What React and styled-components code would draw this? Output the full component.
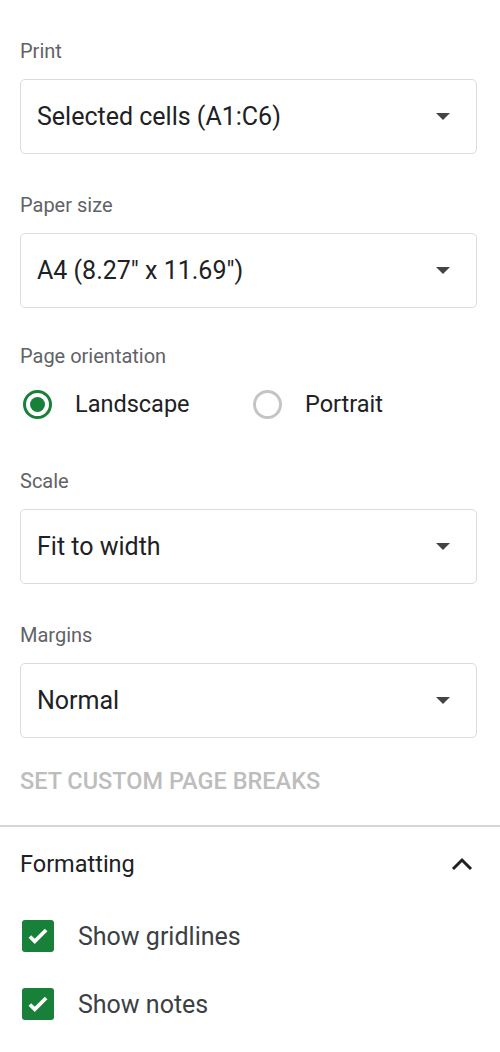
import styled, { createGlobalStyle } from "styled-components";

const Global = createGlobalStyle`
  body {
    margin: 0;
    background: #fff;
    font-family: Roboto, "Noto Sans", sans-serif;
  }
`;

const Panel = styled.div`
  width: 500px;
  display: flex;
  flex-direction: column;
`;

const Section = styled.div`
  padding: 0 23px 0 20px;
  display: flex;
  flex-direction: column;
`;

const Label = styled.div`
  font-size: 20px;
  color: #5f6368;
  line-height: 24px;
  margin-top: ${(p) => p.top}px;
`;

const Select = styled.div`
  margin-top: 16px;
  height: 75px;
  box-sizing: border-box;
  border: 1px solid #dadce0;
  border-radius: 5px;
  display: flex;
  align-items: center;
  justify-content: space-between;
  padding: 0 26px 0 16px;
  font-size: 25px;
  color: #202124;
`;

const Arrow = styled.span`
  width: 0;
  height: 0;
  border-left: 7px solid transparent;
  border-right: 7px solid transparent;
  border-top: 7px solid #444;
`;

const RadioRow = styled.div`
  display: flex;
  align-items: center;
  margin-top: 21px;
  height: 30px;
  padding-left: 3px;
`;

const RadioItem = styled.label`
  display: flex;
  align-items: center;
  gap: 23px;
  font-size: 23.5px;
  color: #202124;
  width: ${(p) => p.w}px;
`;

const RadioCircle = styled.span`
  width: 29px;
  height: 29px;
  box-sizing: border-box;
  border-radius: 50%;
  border: 3px solid ${(p) => (p.on ? "#188038" : "#c4c4c4")};
  display: flex;
  align-items: center;
  justify-content: center;
  &::after {
    content: "";
    display: ${(p) => (p.on ? "block" : "none")};
    width: 15px;
    height: 15px;
    border-radius: 50%;
    background: #188038;
  }
`;

const LinkText = styled.div`
  margin-top: 31px;
  font-size: 23.5px;
  font-weight: 500;
  color: #bdbdbd;
  line-height: 24px;
`;

const Divider = styled.div`
  margin-top: 32px;
  height: 2px;
  background: #d6d6d6;
`;

const Header = styled.div`
  display: flex;
  align-items: center;
  justify-content: space-between;
  padding: 0 27px 0 20px;
  margin-top: 23px;
  font-size: 23.5px;
  color: #202124;
  line-height: 28px;
`;

const CheckRow = styled.label`
  display: flex;
  align-items: center;
  gap: 24px;
  padding-left: 22px;
  height: 32px;
  margin-top: ${(p) => p.top}px;
  font-size: 25px;
  color: #3c4043;
`;

const Box = styled.span`
  width: 32px;
  height: 32px;
  border-radius: 3px;
  background: #188038;
  display: flex;
  align-items: center;
  justify-content: center;
`;

const Chevron = () => (
  <svg width="22" height="14" viewBox="0 0 22 14">
    <path d="M2 12L11 3l9 9" fill="none" stroke="#202124" strokeWidth="3" />
  </svg>
);

const Check = () => (
  <svg width="26" height="26" viewBox="0 0 24 24">
    <path d="M4.5 12.5l4.5 4.5L19.5 6.5" fill="none" stroke="#fff" strokeWidth="3.4" />
  </svg>
);

const Dropdown = ({ value }) => (
  <Select>
    <span>{value}</span>
    <Arrow />
  </Select>
);

export default function App() {
  return (
    <Panel>
      <Global />
      <Section>
        <Label top={39}>Print</Label>
        <Dropdown value="Selected cells (A1:C6)" />
        <Label top={39}>Paper size</Label>
        <Dropdown value={'A4 (8.27" x 11.69")'} />
        <Label top={36}>Page orientation</Label>
        <RadioRow>
          <RadioItem w={230}>
            <RadioCircle on />
            Landscape
          </RadioItem>
          <RadioItem w={200}>
            <RadioCircle />
            Portrait
          </RadioItem>
        </RadioRow>
        <Label top={50}>Scale</Label>
        <Dropdown value="Fit to width" />
        <Label top={39}>Margins</Label>
        <Dropdown value="Normal" />
        <LinkText>SET CUSTOM PAGE BREAKS</LinkText>
      </Section>
      <Divider />
      <Header>
        Formatting
        <Chevron />
      </Header>
      <CheckRow top={42}>
        <Box>
          <Check />
        </Box>
        Show gridlines
      </CheckRow>
      <CheckRow top={36}>
        <Box>
          <Check />
        </Box>
        Show notes
      </CheckRow>
    </Panel>
  );
}
